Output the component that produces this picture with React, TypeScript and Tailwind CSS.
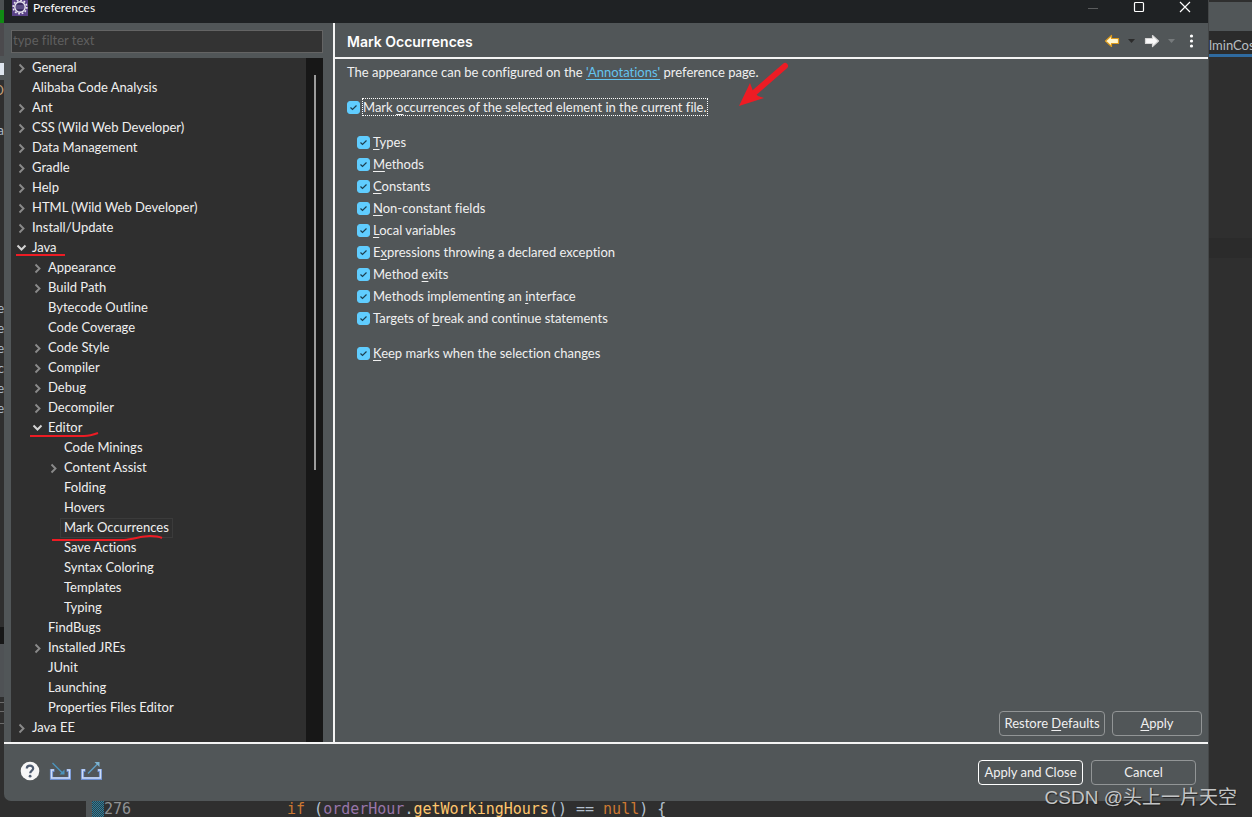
import { ReactNode, useState } from "react"
import { clsx } from "clsx"

interface TreeNode {
  label: string
  level: 0 | 1 | 2
  state?: "open" | "closed"
}

interface Option {
  id: string
  label: ReactNode
}

const indent = ["pl-[5px]", "pl-[21px]", "pl-[37px]"]

const nodes: TreeNode[] = [
  { label: "General", level: 0, state: "closed" },
  { label: "Alibaba Code Analysis", level: 0 },
  { label: "Ant", level: 0, state: "closed" },
  { label: "CSS (Wild Web Developer)", level: 0, state: "closed" },
  { label: "Data Management", level: 0, state: "closed" },
  { label: "Gradle", level: 0, state: "closed" },
  { label: "Help", level: 0, state: "closed" },
  { label: "HTML (Wild Web Developer)", level: 0, state: "closed" },
  { label: "Install/Update", level: 0, state: "closed" },
  { label: "Java", level: 0, state: "open" },
  { label: "Appearance", level: 1, state: "closed" },
  { label: "Build Path", level: 1, state: "closed" },
  { label: "Bytecode Outline", level: 1 },
  { label: "Code Coverage", level: 1 },
  { label: "Code Style", level: 1, state: "closed" },
  { label: "Compiler", level: 1, state: "closed" },
  { label: "Debug", level: 1, state: "closed" },
  { label: "Decompiler", level: 1, state: "closed" },
  { label: "Editor", level: 1, state: "open" },
  { label: "Code Minings", level: 2 },
  { label: "Content Assist", level: 2, state: "closed" },
  { label: "Folding", level: 2 },
  { label: "Hovers", level: 2 },
  { label: "Mark Occurrences", level: 2 },
  { label: "Save Actions", level: 2 },
  { label: "Syntax Coloring", level: 2 },
  { label: "Templates", level: 2 },
  { label: "Typing", level: 2 },
  { label: "FindBugs", level: 1 },
  { label: "Installed JREs", level: 1, state: "closed" },
  { label: "JUnit", level: 1 },
  { label: "Launching", level: 1 },
  { label: "Properties Files Editor", level: 1 },
  { label: "Java EE", level: 0, state: "closed" },
]

// underlined letter of a label
const Key = ({ children }: { children: string }) => (
  <span className="underline underline-offset-2">{children}</span>
)

const options: Option[] = [
  { id: "types", label: <><Key>T</Key>ypes</> },
  { id: "methods", label: <><Key>M</Key>ethods</> },
  { id: "constants", label: <><Key>C</Key>onstants</> },
  { id: "fields", label: <><Key>N</Key>on-constant fields</> },
  { id: "locals", label: <><Key>L</Key>ocal variables</> },
  { id: "exceptions", label: <>E<Key>x</Key>pressions throwing a declared exception</> },
  { id: "exits", label: <>Method <Key>e</Key>xits</> },
  { id: "interface", label: <>Methods implementing an <Key>i</Key>nterface</> },
  { id: "break", label: <>Targets of <Key>b</Key>reak and continue statements</> },
]

const EclipseIcon = () => (
  <svg className="size-4" viewBox="0 0 16 16">
    <rect width="16" height="16" fill="#5a4288" />
    <circle cx="8" cy="7" r="4.5" fill="#3b2d63" />
    <circle cx="8" cy="7" r="5.2" fill="none" stroke="#e9e7ee" strokeWidth="1.4" />
    <circle cx="8" cy="7" r="6.8" fill="none" stroke="#e9e7ee" strokeWidth="1.6" strokeDasharray="1.8 1.76" />
    <path d="M4 6h8M4 8h8" stroke="#8d80b5" strokeWidth="0.8" />
  </svg>
)

const Chevron = ({ open }: { open: boolean }) =>
  open ? (
    <svg className="h-3 w-3" viewBox="0 0 12 12" fill="none" stroke="#d4d4d4" strokeWidth="2">
      <path d="M1.5 3.5 5.5 7.5 9.5 3.5" />
    </svg>
  ) : (
    <svg className="h-3 w-3" viewBox="0 0 12 12" fill="none" stroke="#8a8a8a" strokeWidth="1.9">
      <path d="M3.5 2.5 7.5 6.5 3.5 10.5" />
    </svg>
  )

const NavArrow = ({ back }: { back?: boolean }) => (
  <svg
    className={clsx("h-[14px] w-4", !back && "rotate-180")}
    viewBox="0 0 16 14"
    fill={back ? "#fff6cf" : "#fafafa"}
    stroke={back ? "#dc9a1c" : "#d6d6d6"}
    strokeWidth="1.2"
    strokeLinejoin="round"
  >
    <path d="M1.5 7 7.5 1.5V4.5H14.5V9.5H7.5V12.5Z" />
  </svg>
)

const Caret = ({ dim }: { dim?: boolean }) => (
  <svg className="h-[4px] w-[7px]" viewBox="0 0 7 4">
    <path d="M0 0H7L3.5 4Z" fill={dim ? "#767a7c" : "#2b2b2b"} />
  </svg>
)

const TitleBar = () => (
  <header className="flex h-[23px] items-start bg-[#1f2224] pl-2">
    <div className="flex h-4 flex-1 items-center gap-[5px] text-[12px] text-white">
      <EclipseIcon />
      <h1>Preferences</h1>
    </div>
    <div className="flex h-[14px] items-center gap-[34px] pr-[17px]">
      <button aria-label="Minimize">
        <svg className="size-3" viewBox="0 0 12 12" stroke="#5a5c5d">
          <path d="M1 7.5H11" />
        </svg>
      </button>
      <button aria-label="Maximize">
        <svg className="size-3" viewBox="0 0 12 12" fill="none" stroke="#fff" strokeWidth="1.2">
          <rect x="1.5" y="1.5" width="9" height="9" rx="1" />
        </svg>
      </button>
      <button aria-label="Close">
        <svg className="size-3" viewBox="0 0 12 12" stroke="#fff" strokeWidth="1.2">
          <path d="M1 1 11 11M11 1 1 11" />
        </svg>
      </button>
    </div>
  </header>
)

const PreferenceTree = () => {
  const [selected, setSelected] = useState("Mark Occurrences")

  return (
    <div className="flex flex-1 bg-[#2f2f2f]">
      <ul className="flex-1">
        {nodes.map((node) => (
          <li key={node.label} className={clsx("flex h-5 items-center", indent[node.level])}>
            <span className="w-3">{node.state && <Chevron open={node.state === "open"} />}</span>
            <button
              onClick={() => setSelected(node.label)}
              className={clsx(
                "h-5 border px-[3px] pb-[2px] leading-4 text-[#f0f0f0]",
                selected === node.label ? "border-[#3b3b3b]" : "border-transparent"
              )}
            >
              {node.label}
            </button>
          </li>
        ))}
      </ul>
      <div className="w-[17px] bg-[#171717] pt-[17px]">
        <div className="ml-2 h-[395px] w-[2px] bg-[#9b9b9b]" />
      </div>
    </div>
  )
}

const CheckOption = ({ id, children, focused }: { id: string; children: ReactNode; focused?: boolean }) => (
  <div className="flex h-[22px] items-center gap-[3px]">
    <span className="grid size-[13px]">
      <input
        id={id}
        type="checkbox"
        defaultChecked
        className="peer col-start-1 row-start-1 size-[13px] appearance-none rounded-[3px] border border-[#9a9a9a] checked:border-[#60cdff] checked:bg-[#60cdff]"
      />
      <svg
        className="pointer-events-none invisible col-start-1 row-start-1 size-[13px] peer-checked:visible"
        viewBox="0 0 13 13"
        fill="none"
        stroke="#1d3f50"
        strokeWidth="1.2"
      >
        <path d="M3.5 6.5 5.5 8.5 9.5 4.5" />
      </svg>
    </span>
    <label htmlFor={id} className={clsx("leading-4", focused && "outline-1 outline-dotted outline-white")}>
      {children}
    </label>
  </div>
)

const buttonStyle = "h-[25px] rounded-[4px] border pb-[2px] text-center leading-4"

const PreferencePage = () => (
  <main className="flex flex-1 flex-col">
    <div className="flex h-9 items-center border-b-2 border-[#f4f4f4] pr-[14px] pl-3">
      <h2 className="flex-1 pt-[2px] font-[Inter,sans-serif] text-[14px] font-semibold text-white">Mark Occurrences</h2>
      <div className="flex items-center gap-2 pt-[2px]">
        <button aria-label="Back"><NavArrow back /></button>
        <button aria-label="Back history"><Caret /></button>
        <button aria-label="Forward" className="pl-[1px]"><NavArrow /></button>
        <button aria-label="Forward history"><Caret dim /></button>
        <button aria-label="Menu" className="pl-[6px]">
          <svg className="h-[14px] w-[5px]" viewBox="0 0 5 14" fill="#fff">
            <circle cx="2.5" cy="2" r="1.6" />
            <circle cx="2.5" cy="7" r="1.6" />
            <circle cx="2.5" cy="12" r="1.6" />
          </svg>
        </button>
      </div>
    </div>
    <div className="flex-1 pl-3">
      <p className="h-7 leading-[26px]">
        The appearance can be configured on the{" "}
        <a href="#annotations" className="text-[#64c3ee] underline underline-offset-2">'Annotations'</a> preference page.
      </p>
      <div className="mt-[9px]">
        <CheckOption id="mark" focused>
          Mark <Key>o</Key>ccurrences of the selected element in the current file.
        </CheckOption>
      </div>
      <div className="mt-[13px] pl-[10px]">
        {options.map((option) => (
          <CheckOption key={option.id} id={option.id}>
            {option.label}
          </CheckOption>
        ))}
      </div>
      <div className="mt-[13px] pl-[10px]">
        <CheckOption id="keep">
          <Key>K</Key>eep marks when the selection changes
        </CheckOption>
      </div>
    </div>
    <div className="flex justify-end gap-[7px] p-[6px]">
      <button className={clsx(buttonStyle, "w-[106px] border-[#929596]")}>
        Restore <Key>D</Key>efaults
      </button>
      <button className={clsx(buttonStyle, "w-[90px] border-[#929596]")}>
        <Key>A</Key>pply
      </button>
    </div>
  </main>
)

const Footer = () => (
  <footer className="flex h-[59px] items-start border-t-2 border-[#f4f4f4] pt-4 pr-3 pl-4">
    <div className="flex flex-1 items-center gap-[9px] pt-[1px]">
      <button aria-label="Help">
        <svg className="size-5" viewBox="0 0 20 20">
          <circle cx="10" cy="10" r="9.3" fill="#f7f7f7" />
          <path d="M6.8 7.6C6.8 3.6 13.2 3.8 13.2 7.4C13.2 9.6 10.2 9.6 10.2 12.2" fill="none" stroke="#4f5c70" strokeWidth="2.2" />
          <circle cx="10.1" cy="15.2" r="1.4" fill="#4f5c70" />
        </svg>
      </button>
      <button aria-label="Import">
        <svg className="h-5 w-[22px]" viewBox="0 0 22 20" fill="none">
          <path d="M5.5 9.5H2.5V17.5H20.5V9.5H17.5" stroke="#6d8fd0" strokeWidth="3.2" />
          <path d="M5 9H2.5V17H20.5V9H18" stroke="#cddcf5" strokeWidth="1.4" />
          <path d="M3.5 2 13.5 12" stroke="#4b93bb" strokeWidth="1.4" />
          <path d="M15.5 13.5H10.5L15.5 8.5Z" fill="#4b93bb" />
        </svg>
      </button>
      <button aria-label="Export">
        <svg className="h-5 w-[22px]" viewBox="0 0 22 20" fill="none">
          <path d="M5.5 9.5H2.5V17.5H20.5V9.5H17.5" stroke="#6d8fd0" strokeWidth="3.2" />
          <path d="M5 9H2.5V17H20.5V9H18" stroke="#cddcf5" strokeWidth="1.4" />
          <path d="M8 12.5 18 2.5" stroke="#5f9fc4" strokeWidth="1.4" />
          <path d="M19.5 1V6L14.5 1Z" fill="#7db3d0" />
        </svg>
      </button>
    </div>
    <div className="flex gap-2">
      <button className={clsx(buttonStyle, "w-[105px] border-white")}>Apply and Close</button>
      <button className={clsx(buttonStyle, "w-[105px] border-[#929596]")}>Cancel</button>
    </div>
  </footer>
)

// slice of the editor window on the left of the dialog
const LeftEdge = () => (
  <div className="flex w-1 flex-col overflow-hidden leading-5 text-[#a9b7c6]">
    <div className="h-[10px] bg-[#4c5052]" />
    <div className="h-[13px] bg-[#118a14]" />
    <div className="h-[33px] bg-[#4b4a4d]" />
    <div className="h-[7px] bg-[#515658]" />
    <div className="h-3 bg-[#dfe6ef]" />
    <div className="h-[5px] bg-[#515658]" />
    <div className="flex h-10 justify-end text-[#c9a37c]">D</div>
    <div className="flex h-[178px] justify-end">ja</div>
    {["e", "e", "e", "c", "e", "e"].map((letter, i) => (
      <div key={i} className="flex h-5 justify-end">
        {letter}
      </div>
    ))}
    <div className="h-[209px]" />
    <div className="h-[17px] bg-[#171717]" />
    <div className="h-[53px] bg-[#4f5255]" />
    <div className="mt-[5px] h-[10px] border-y border-[#6b6b6b]" />
    <div className="h-3 border-b border-[#6b6b6b]" />
  </div>
)

const RightEdge = () => (
  <div className="flex w-11 flex-col overflow-hidden border-l border-[#444748]">
    <div className="h-[2px]" />
    <div className="h-[29px] bg-[#515658]" />
    <div className="flex h-[26px] items-center border-b-[3px] border-[#2f6a9f] bg-[#2b2b2b] pt-[6px] text-[#b9bec2]">
      lminCost
    </div>
    <div className="h-[181px]" />
    <div className="h-5 bg-[#2b2b2b]" />
  </div>
)

const CodeLine = () => (
  <div className="flex h-4 overflow-hidden pl-[86px] font-['DejaVu_Sans_Mono',monospace] text-[15px] leading-4 whitespace-pre">
    <div className="w-[6px] bg-[#515658]" />
    <div className="w-3 bg-[repeating-conic-gradient(#2a7f9e_0_25%,#2f3f46_0_50%)] bg-[length:2px_2px]" />
    <span className="w-[183px] text-[#8f9294]">276</span>
    <code className="font-['DejaVu_Sans_Mono',monospace] text-[#b4c1cf]">
      <span className="text-[#cc7832]">if</span> (<span className="text-[#9876aa]">orderHour</span>.
      <span className="text-[#ffc66d]">getWorkingHours</span>() == <span className="text-[#cc7832]">null</span>) {"{"}
    </code>
  </div>
)

// hand-drawn marks over the dialog
const Marks = () => (
  <svg className="pointer-events-none absolute top-0 left-0 h-[560px] w-[800px]" viewBox="0 0 800 560" fill="none" stroke="#ed1c24" strokeWidth="2">
    <path d="M16 255H65" />
    <path d="M30 436H84C90 436 94 434.5 98 433" />
    <path d="M52 540H124C134 539 142 536 150 536C156 536 159 536.5 162 538" />
    <path d="M785 66 754 93" strokeWidth="6" strokeLinecap="round" />
    <path d="M739 106 750 83 753 91 758 96 764 98Z" fill="#ed1c24" stroke="none" />
  </svg>
)

const App = () => {
  return (
    <div className="relative flex min-h-screen flex-col overflow-hidden bg-[#2f2f2f] font-[Lato,sans-serif] text-[13px] text-[#f0f0f0] [font-variant-ligatures:none]">
      <div className="flex flex-1">
        <LeftEdge />
        <section className="flex flex-1 flex-col overflow-hidden rounded-b-[7px] bg-[#515658]">
          <TitleBar />
          <div className="flex flex-1">
            <aside className="flex w-[331px] flex-col border-r-2 border-[#f4f4f4] pr-[10px] pl-[7px]">
              <input
                type="text"
                aria-label="Filter preferences"
                placeholder="type filter text"
                className="mt-[7px] mb-[5px] h-[23px] border border-[#646464] bg-[#333333] px-[1px] pb-1 placeholder:text-[#5f5f5f]"
              />
              <PreferenceTree />
            </aside>
            <PreferencePage />
          </div>
          <Footer />
        </section>
        <RightEdge />
      </div>
      <CodeLine />
      <Marks />
      <div className="absolute right-[15px] bottom-[5px] font-['Liberation_Sans','Noto_Sans_CJK_SC',sans-serif] text-[19px] leading-7 text-[#c3c5c6] [text-shadow:1px_1px_1px_#222]">
        CSDN @头上一片天空
      </div>
    </div>
  )
}
export default App
